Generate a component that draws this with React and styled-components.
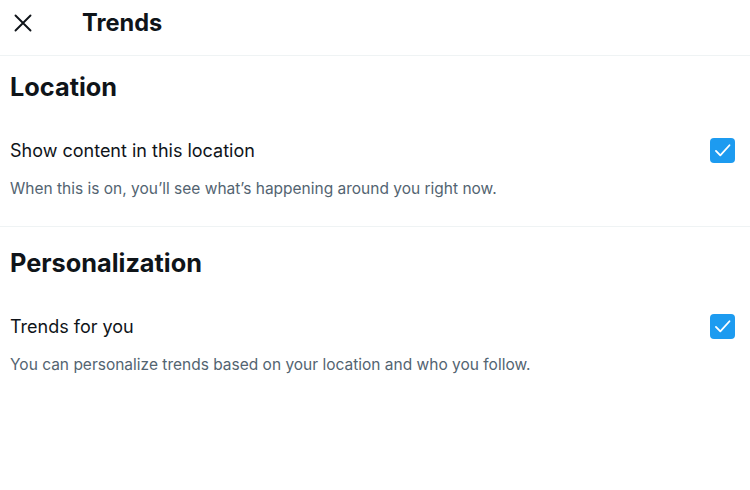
import React from "react";
import styled, { createGlobalStyle } from "styled-components";

const GlobalStyle = createGlobalStyle`
  body {
    margin: 0;
    background: #ffffff;
    font-family: Inter, "Noto Sans", "Liberation Sans", sans-serif;
    color: #0f1419;
  }
`;

const Page = styled.div`
  width: 750px;
  height: 490px;
  background: #ffffff;
  overflow: hidden;
`;

const Header = styled.div`
  height: 56px;
  display: flex;
  align-items: flex-start;
  padding: 8px 0 0 13px;
  border-bottom: 1px solid #eff3f4;
  box-sizing: border-box;
`;

const CloseButton = styled.button`
  width: 20px;
  height: 30px;
  display: flex;
  align-items: center;
  justify-content: center;
  background: none;
  border: none;
  padding: 0;
  margin-right: 49px;
`;

const Title = styled.h1`
  margin: 0;
  font-size: 23.6px;
  line-height: 30px;
  font-weight: 700;
`;

const Section = styled.section`
  padding: ${(p) => p.top}px 15px ${(p) => p.bottom}px 10px;
  border-bottom: ${(p) => (p.divider ? "1px solid #eff3f4" : "none")};
`;

const SectionTitle = styled.h2`
  margin: 0;
  font-size: 25.3px;
  line-height: 30px;
  font-weight: 700;
`;

const Row = styled.div`
  display: flex;
  align-items: center;
  justify-content: space-between;
  height: 25px;
  margin-top: ${(p) => p.gap}px;
`;

const Label = styled.span`
  font-size: 18px;
  font-weight: 400;
  color: #0f1419;
`;

const Check = styled.span`
  width: 25px;
  height: 25px;
  border-radius: 4px;
  background: #1d9bf0;
  display: flex;
  align-items: center;
  justify-content: center;
`;

const Hint = styled.p`
  margin: 16px 0 0;
  font-size: 15.5px;
  line-height: 20px;
  color: #536471;
`;

const CheckBox = () => (
  <Check>
    <svg width="21" height="21" viewBox="0 0 24 24" fill="none">
      <path d="M4.5 12.5l5 5L20 6" stroke="#fff" strokeWidth="2.1" strokeLinecap="round" strokeLinejoin="round" />
    </svg>
  </Check>
);

export default function App() {
  return (
    <Page>
      <GlobalStyle />
      <Header>
        <CloseButton aria-label="Close">
          <svg width="18" height="18" viewBox="0 0 18 18">
            <path d="M1.5 1.5l15 15M16.5 1.5l-15 15" stroke="#0f1419" strokeWidth="1.9" strokeLinecap="round" />
          </svg>
        </CloseButton>
        <Title>Trends</Title>
      </Header>
      <Section divider top={16} bottom={27}>
        <SectionTitle>Location</SectionTitle>
        <Row gap={36}>
          <Label>Show content in this location</Label>
          <CheckBox />
        </Row>
        <Hint>When this is on, you’ll see what’s happening around you right now.</Hint>
      </Section>
      <Section top={21} bottom={20}>
        <SectionTitle>Personalization</SectionTitle>
        <Row gap={36}>
          <Label>Trends for you</Label>
          <CheckBox />
        </Row>
        <Hint>You can personalize trends based on your location and who you follow.</Hint>
      </Section>
    </Page>
  );
}
